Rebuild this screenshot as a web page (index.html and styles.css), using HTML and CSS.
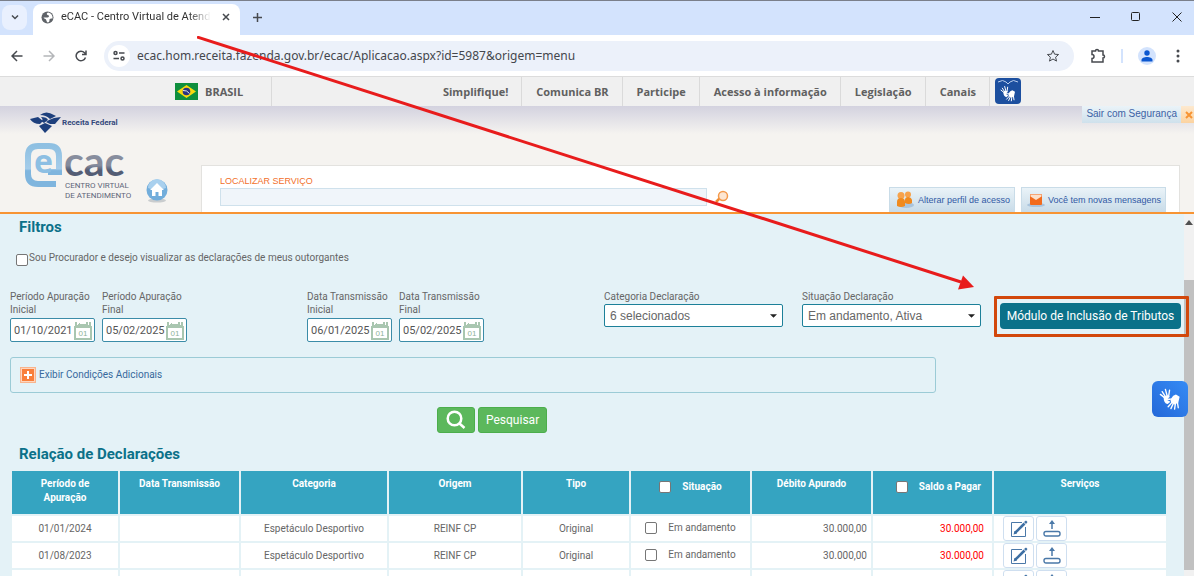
FILE: index.html
```html
<!DOCTYPE html>
<html lang="pt-BR">

<head>
    <meta charset="UTF-8">
    <meta name="viewport" content="width=device-width, initial-scale=1.0">
    <title>eCAC - Centro Virtual de Atendimento</title>
    <link rel="stylesheet" href="styles.css">
</head>

<body>
    <!-- símbolos reutilizados -->
    <svg class="sprites" aria-hidden="true">
        <symbol id="i-hands" viewBox="0 0 24 24">
            <g fill="none" stroke="#fff" stroke-linecap="round" stroke-linejoin="round">
                <path stroke-width="1.5" d="M6 10.500 1.500 7M7 9.500 3.500 4M9 9 7 1.500M10.500 9 11.500 2.500"/>
                <path stroke-width="1.5" d="M14 16l-4 4.500M16 16l-3 6.500M18 16l-1 7M20 15l1 6.500"/>
            </g>
            <path fill="#fff" d="M5 9.500 9 8l3 1.500-2.500 2L14 11.500 12 13H9l3.500 2-3 2.500Q5 17 5 9.500z"/>
            <path fill="#fff" d="M13 14l-1-1 3.500-4.500 3-1.500 4 2.500L21 16l-4 2-4-2z"/>
        </symbol>
        <symbol id="i-edit" viewBox="0 0 18 18">
            <path fill="none" stroke="#4a78a8" d="M12 2.500H1.500v14h14V7"/>
            <path stroke="#3d6fa3" stroke-width="2.600" d="M5 13 14.500 3.500"/>
            <path fill="#3d6fa3" d="m3.500 14.500 1-3.500 2.500 2.500zM14 2l2-1.500L17.500 2 16 4z"/>
        </symbol>
        <symbol id="i-send" viewBox="0 0 18 18">
            <path stroke="#4a78a8" stroke-width="1.500" d="M9 9V3"/>
            <path fill="#4a78a8" d="M9 0 6 4h6z"/>
            <rect x="1" y="11.500" width="16" height="4.500" rx="2" fill="none" stroke="#4a78a8" stroke-width="1.400"/>
        </symbol>
        <symbol id="i-calendar" viewBox="0 0 18 19">
            <path fill="#a9c6b0" d="M0 5h1V1h2v2h2V2h1v1h6V1h2v2h1V1h2v4h1v14H0z"/>
            <path fill="#fff" d="M2 7h14v10H2zM3 2h1v2H3zM14 2h1v2h-1z"/>
            <text x="9" y="15" text-anchor="middle" font-family="Liberation Sans, sans-serif" font-size="8" fill="#8fb39a">01</text>
        </symbol>
    </svg>

    <div class="tab-strip">
        <button class="tab-search" aria-label="Pesquisar guias">
            <svg width="10" height="10" viewBox="0 0 10 10"><path d="m2 3.500 3 3 3-3"/></svg>
        </button>
        <div class="tab">
            <svg width="13" height="13" viewBox="0 0 13 13">
                <circle cx="6.500" cy="6.500" r="6" fill="#5f6368"/>
                <path fill="#fff" d="M7 1.500c-1 .5-1.500 1-1 2s2 .5 2 1.500-1 1.500-2.500 1.500H2.500c.5 1.500 2 1 2.500 2s.5 2 1.500 3c2 0 2-2 2-3s1.500-1 3-1c.5-3-1.500-5.500-4.500-6z"/>
            </svg>
            <span class="tab-title">eCAC - Centro Virtual de Atendimento</span>
            <button class="tab-close" aria-label="Fechar guia">
                <svg width="10" height="10" viewBox="0 0 10 10"><path d="m2 2 6 6M8 2 2 8"/></svg>
            </button>
        </div>
        <button class="new-tab" aria-label="Nova guia">
            <svg width="11" height="11" viewBox="0 0 11 11"><path d="M5.500 1v9M1 5.500h9"/></svg>
        </button>
        <div class="window-buttons">
            <button aria-label="Minimizar"><svg width="10" height="10" viewBox="0 0 10 10"><path d="M0 5.500h10"/></svg></button>
            <button aria-label="Maximizar"><svg width="10" height="10" viewBox="0 0 10 10"><rect x=".5" y=".5" width="8" height="8" rx="1"/></svg></button>
            <button aria-label="Fechar"><svg width="10" height="10" viewBox="0 0 10 10"><path d="m.5.5 9 9M9.500.5l-9 9"/></svg></button>
        </div>
    </div>

    <div class="toolbar">
        <button aria-label="Voltar"><svg width="12" height="12" viewBox="0 0 12 12"><path d="M11.500 6H1M6 1 1 6l5 5"/></svg></button>
        <button class="disabled" aria-label="Avançar"><svg width="12" height="12" viewBox="0 0 12 12"><path d="M.5 6H11M6 1l5 5-5 5"/></svg></button>
        <button aria-label="Recarregar"><svg width="12" height="12" viewBox="0 0 12 12"><path d="M10.500 7.500A4.800 4.800 0 1 1 9.500 2.700L11 4.200M11 .5v4H7"/></svg></button>
        <div class="address">
            <span class="site-info">
                <svg width="12" height="12" viewBox="0 0 12 12"><circle cx="2.500" cy="3" r="1.500"/><path d="M6 3h5.500M.5 8.500H6"/><circle cx="9.500" cy="8.500" r="1.500"/></svg>
            </span>
            <input type="text" aria-label="Endereço" value="ecac.hom.receita.fazenda.gov.br/ecac/Aplicacao.aspx?id=5987&amp;origem=menu">
            <button aria-label="Favoritos">
                <svg width="14" height="14" viewBox="0 0 14 14"><path d="m7 1.500 1.600 3.700 4 .3-3 2.700.9 3.900L7 10l-3.500 2.100.9-3.900-3-2.700 4-.3z"/></svg>
            </button>
        </div>
        <button class="extensions" aria-label="Extensões">
            <svg width="16" height="16" viewBox="0 0 16 16"><path d="M2 3h3.500a1.500 1.500 0 0 1 3 0H13v4a1.500 1.500 0 0 1 0 3v4H2v-3.500a2 2 0 0 0 0-4z"/></svg>
        </button>
        <span class="divider"></span>
        <button class="profile" aria-label="Perfil">
            <svg width="12" height="12" viewBox="0 0 12 12"><circle cx="6" cy="3" r="2.700"/><path d="M.5 11.500V10c0-4 11-4 11 0v1.500z"/></svg>
        </button>
        <button aria-label="Menu">
            <svg class="dots" width="4" height="14" viewBox="0 0 4 14"><circle cx="2" cy="2" r="1.500"/><circle cx="2" cy="7" r="1.500"/><circle cx="2" cy="12" r="1.500"/></svg>
        </button>
    </div>

    <nav class="gov-bar">
        <a class="brasil" href="#">
            <svg width="23" height="17" viewBox="0 0 23 17">
                <path fill="#0f8f3d" d="M0 0h23v17H0z"/>
                <path fill="#f8d90f" d="M11.500 2 21 8.500 11.500 15 2 8.500z"/>
                <circle cx="11.500" cy="8.500" r="3.800" fill="#2a3480"/>
                <path fill="none" stroke="#dfe5ee" d="M8 7.500q4-.5 6.500 3"/>
            </svg>
            BRASIL
        </a>
        <a href="#">Simplifique!</a>
        <a href="#">Comunica BR</a>
        <a href="#">Participe</a>
        <a href="#">Acesso à informação</a>
        <a href="#">Legislação</a>
        <a href="#">Canais</a>
        <button class="vlibras-small" aria-label="VLibras">
            <svg width="26" height="26" viewBox="0 0 26 26">
                <path fill="none" stroke="#b9cdec" d="M3 4q5-3 8 0l2 2 2-2q3-3 8 0"/>
                <use href="#i-hands" x="5" y="7" width="16" height="17"/>
            </svg>
        </button>
    </nav>

    <header class="header">
        <div class="logos">
            <div class="receita">
                <svg width="31" height="21" viewBox="0 0 31 21">
                    <g fill="#1d3f7c">
                        <path d="M0 7l8-2 5 4-3 3Q3 12 0 7z"/>
                        <path d="M10 3q6-5 14 0l2 1-6 3q-4-4-10-4z"/>
                        <path d="M11 5q6 0 7 3l-4 3-3-2q3-1 0-4z"/>
                        <path d="M19 8l5-2 7-1-6 7h-5l-4-2z"/>
                        <path d="M9 14l6-3 7 3-7 7z"/>
                    </g>
                </svg>
                Receita Federal
            </div>
            <svg class="ecac" width="112" height="58" viewBox="0 0 112 58" role="img" aria-label="eCAC Centro Virtual de Atendimento">
                <defs>
                    <linearGradient id="g-blue" x1="0" y1="0" x2="0" y2="1">
                        <stop offset="0" stop-color="#8fc0e2"/><stop offset=".6" stop-color="#a5cdea"/><stop offset=".65" stop-color="#7fb5de"/>
                    </linearGradient>
                    <linearGradient id="g-gray" x1="0" y1="0" x2="0" y2="1">
                        <stop offset="0" stop-color="#8d93a3"/><stop offset=".6" stop-color="#858b9c"/><stop offset=".7" stop-color="#545d75"/>
                    </linearGradient>
                </defs>
                <path fill="none" stroke="url(#g-blue)" stroke-width="6" d="M32 42H14Q4 42 4 32V14Q4 4 14 4H25Q35 4 35 14V30H24"/>
                <text x="10" y="31" class="logo-e">e</text>
                <text x="40" y="34" class="logo-cac">cac</text>
                <text x="41" y="46" class="logo-small">CENTRO VIRTUAL</text>
                <text x="41" y="56" class="logo-small">DE ATENDIMENTO</text>
            </svg>
        </div>
        <a class="home" href="#" aria-label="Início">
            <svg width="22" height="24" viewBox="0 0 22 24">
                <ellipse cx="11" cy="21.500" rx="9" ry="2" fill="#c9ccce"/>
                <circle cx="11" cy="11" r="10.500" fill="#72addb"/>
                <path fill="#a9d0ee" d="M2 9a9 9 0 0 1 18 0q-9 4-18 0z"/>
                <path fill="#fff" d="m11 4 7 7h-2v6h-3.500v-4h-3v4H6v-6H4z"/>
            </svg>
        </a>
        <div class="header-main">
            <div class="logout">
                <a href="#">Sair com Segurança</a>
                <button aria-label="Fechar sessão"><svg width="8" height="8" viewBox="0 0 8 8"><path d="m1 1 6 6M7 1 1 7"/></svg></button>
            </div>
            <div class="service-box">
                <form class="service-search">
                    <label for="servico">LOCALIZAR SERVIÇO</label>
                    <div class="service-row">
                        <input type="text" id="servico">
                        <button type="button" aria-label="Localizar">
                            <svg width="14" height="14" viewBox="0 0 14 14"><path stroke="#f08a30" stroke-width="2.500" d="m1 12 4-4"/><circle cx="8" cy="6" r="4.500" fill="#fde6d2" stroke="#f49a4c" stroke-width="1.500"/></svg>
                        </button>
                    </div>
                </form>
                <a class="header-link" href="#">
                    <svg width="20" height="18" viewBox="0 0 20 18">
                        <ellipse cx="11" cy="14" rx="8" ry="3" fill="#a9c4dd"/>
                        <circle cx="13" cy="3.500" r="3" fill="#f7a24b"/><path fill="#f08a1e" d="M10 12V9q0-3 3-3t4 3v3q-3 2-7 0z"/>
                        <circle cx="6" cy="4.500" r="3.500" fill="#f7a24b"/><path fill="#f08a1e" d="M2 15v-4q0-4 4-4t4 4v4q-4 2-8 0z"/>
                    </svg>
                    Alterar perfil de acesso
                </a>
                <a class="header-link" href="#">
                    <svg width="18" height="16" viewBox="0 0 18 16">
                        <ellipse cx="9" cy="13" rx="9" ry="2" fill="#a9c4dd"/>
                        <rect x="3" y="2" width="12" height="11" rx="1" fill="#f26b1d"/>
                        <path fill="#fbe0cb" d="M3.500 2.500h11v2L9 8 3.500 4.500z"/>
                    </svg>
                    Você tem novas mensagens
                </a>
            </div>
        </div>
    </header>

    <div class="page">
        <main class="content">
            <h2>Filtros</h2>
            <label class="procurador"><input type="checkbox"> Sou Procurador e desejo visualizar as declarações de meus outorgantes</label>

            <form class="filters">
                <div class="field date">
                    <label for="apuracaoInicial">Período Apuração Inicial</label>
                    <div class="date-box"><input type="text" id="apuracaoInicial" value="01/10/2021"><svg width="18" height="19"><use href="#i-calendar"/></svg></div>
                </div>
                <div class="field date">
                    <label for="apuracaoFinal">Período Apuração Final</label>
                    <div class="date-box"><input type="text" id="apuracaoFinal" value="05/02/2025"><svg width="18" height="19"><use href="#i-calendar"/></svg></div>
                </div>
                <div class="field date group-start">
                    <label for="transmissaoInicial">Data Transmissão Inicial</label>
                    <div class="date-box"><input type="text" id="transmissaoInicial" value="06/01/2025"><svg width="18" height="19"><use href="#i-calendar"/></svg></div>
                </div>
                <div class="field date">
                    <label for="transmissaoFinal">Data Transmissão Final</label>
                    <div class="date-box"><input type="text" id="transmissaoFinal" value="05/02/2025"><svg width="18" height="19"><use href="#i-calendar"/></svg></div>
                </div>
                <div class="field choice group-start">
                    <label for="categoria">Categoria Declaração</label>
                    <select id="categoria"><option>6 selecionados</option></select>
                </div>
                <div class="field choice">
                    <label for="situacao">Situação Declaração</label>
                    <select id="situacao"><option>Em andamento, Ativa</option></select>
                </div>
                <div class="modulo-box">
                    <button type="button" class="modulo">Módulo de Inclusão de Tributos</button>
                    <span class="highlight"></span>
                </div>
            </form>

            <div class="conditions">
                <a href="#">
                    <svg width="16" height="16" viewBox="0 0 16 16"><path fill="#f9b48c" d="M0 0h16v16H0z"/><path fill="#f97f3a" stroke="#fff" stroke-width=".6" d="M1.500 1.500h13v13h-13z"/><path stroke="#fff" stroke-width="2" d="M8 4v8M4 8h8"/></svg>
                    Exibir Condições Adicionais
                </a>
            </div>

            <div class="actions">
                <button class="search-icon" aria-label="Buscar">
                    <svg width="20" height="20" viewBox="0 0 20 20"><circle cx="8.500" cy="8.500" r="6.800"/><path d="m13.500 13.500 5 4.500"/></svg>
                </button>
                <button>Pesquisar</button>
            </div>

            <h2>Relação de Declarações</h2>
            <table class="declaracoes">
                <colgroup>
                    <col class="c-periodo"><col class="c-data"><col class="c-categoria"><col class="c-origem"><col class="c-tipo"><col class="c-data"><col class="c-data"><col class="c-data"><col>
                </colgroup>
                <thead>
                    <tr>
                        <th>Período de Apuração</th>
                        <th>Data Transmissão</th>
                        <th>Categoria</th>
                        <th>Origem</th>
                        <th>Tipo</th>
                        <th><label class="check"><input type="checkbox"> Situação</label></th>
                        <th>Débito Apurado</th>
                        <th class="right"><label class="check"><input type="checkbox"> Saldo a Pagar</label></th>
                        <th>Serviços</th>
                    </tr>
                </thead>
                <tbody>
                    <tr>
                        <td>01/01/2024</td>
                        <td></td>
                        <td>Espetáculo Desportivo</td>
                        <td>REINF CP</td>
                        <td>Original</td>
                        <td><label class="check"><input type="checkbox"> Em andamento</label></td>
                        <td class="debito">30.000,00</td>
                        <td class="saldo">30.000,00</td>
                        <td class="servicos">
                            <button aria-label="Editar"><svg width="18" height="18"><use href="#i-edit"/></svg></button>
                            <button aria-label="Transmitir"><svg width="18" height="18"><use href="#i-send"/></svg></button>
                        </td>
                    </tr>
                    <tr>
                        <td>01/08/2023</td>
                        <td></td>
                        <td>Espetáculo Desportivo</td>
                        <td>REINF CP</td>
                        <td>Original</td>
                        <td><label class="check"><input type="checkbox"> Em andamento</label></td>
                        <td class="debito">30.000,00</td>
                        <td class="saldo">30.000,00</td>
                        <td class="servicos">
                            <button aria-label="Editar"><svg width="18" height="18"><use href="#i-edit"/></svg></button>
                            <button aria-label="Transmitir"><svg width="18" height="18"><use href="#i-send"/></svg></button>
                        </td>
                    </tr>
                    <tr>
                        <td></td>
                        <td></td>
                        <td></td>
                        <td></td>
                        <td></td>
                        <td></td>
                        <td></td>
                        <td></td>
                        <td class="servicos">
                            <button aria-label="Editar"><svg width="18" height="18"><use href="#i-edit"/></svg></button>
                            <button aria-label="Transmitir"><svg width="18" height="18"><use href="#i-send"/></svg></button>
                        </td>
                    </tr>
                </tbody>
            </table>
        </main>
        <div class="scrollbar">
            <svg width="8" height="5" viewBox="0 0 8 5"><path d="M4 0 8 5H0z"/></svg>
            <span class="thumb"></span>
        </div>
        <button class="vlibras" aria-label="VLibras"><svg width="22" height="24"><use href="#i-hands"/></svg></button>
    </div>

    <svg class="arrow" width="778" height="254" viewBox="0 0 778 254" aria-hidden="true">
        <path stroke="#e81c1c" stroke-width="3" d="m0 1 764 245"/>
        <path fill="#e81c1c" d="m777 251-11-11.500-5 14z"/>
    </svg>
</body>

</html>
```

FILE: styles.css
```css
:root {
    --teal: #0b7189;
    --teal-light: #35a4c1;
    --page-bg: #e4f2f7;
    --orange: #f79433;
    --text: #666666;
    --chrome-blue: #d3e3fd;
}

* {
    box-sizing: border-box;
}

body {
    font-family: Roboto, sans-serif;
    font-size: 10px;
    color: var(--text);
    margin: 0;
    height: 100vh;
    display: flex;
    flex-direction: column;
    overflow: hidden;
    position: relative;
}

button {
    font-family: inherit;
    border: none;
    background: none;
    padding: 0;
    cursor: pointer;
    display: flex;
    align-items: center;
    justify-content: center;
}

input {
    font-family: inherit;
    margin: 0;
}

input[type="checkbox"] {
    appearance: none;
    width: 12px;
    height: 12px;
    background: #fff;
    border: 1px solid #767676;
    border-radius: 2px;
    flex-shrink: 0;
}

input[type="checkbox"]:checked {
    background: var(--teal);
}

a {
    text-decoration: none;
}

svg {
    flex-shrink: 0;
}

.sprites {
    position: absolute;
    width: 0;
    height: 0;
}

/* navegador */
.tab-strip {
    display: flex;
    align-items: center;
    height: 35px;
    flex-shrink: 0;
    padding-bottom: 2px;
    background: var(--chrome-blue);
    border-top: 1px solid #7a7f8a;
}

.tab-strip svg,
.toolbar svg {
    fill: none;
    stroke: #474a4f;
    stroke-width: 1.5;
}

.tab-search {
    width: 25px;
    height: 25px;
    margin-left: 2px;
    border-radius: 8px;
    background: #e9f0fe;
}

.tab {
    display: flex;
    align-items: center;
    align-self: flex-end;
    width: 207px;
    height: 31px;
    margin: 0 0 -2px 6px;
    padding: 0 9px 5px 8px;
    border-radius: 8px 8px 0 0;
    background: #fff;
}

.tab > svg {
    stroke: none;
}

.tab-title {
    flex: 1;
    margin: 0 10px 0 7px;
    font-size: 11px;
    line-height: 16px;
    color: #333;
    white-space: nowrap;
    overflow: hidden;
    mask-image: linear-gradient(to right, #000 85%, transparent);
}

.new-tab {
    margin-left: 12px;
}

.window-buttons {
    display: flex;
    gap: 31px;
    margin-left: auto;
    margin-right: 12px;
}

.window-buttons svg {
    stroke: #222;
    stroke-width: 1;
}

.toolbar {
    display: flex;
    align-items: center;
    height: 41px;
    flex-shrink: 0;
    padding: 0 14px 0 11px;
    gap: 20px;
    background: #fff;
}

.toolbar .disabled svg {
    stroke: #b4b6b9;
}

.address {
    display: flex;
    align-items: center;
    flex: 1;
    height: 30px;
    margin-left: -3px;
    padding: 0 14px 0 4px;
    border-radius: 15px;
    background: #ecf1fa;
}

.site-info {
    display: flex;
    align-items: center;
    justify-content: center;
    width: 22px;
    height: 22px;
    border-radius: 11px;
    background: #fff;
}

.address input {
    flex: 1;
    padding: 0 0 0 7px;
    border: none;
    background: none;
    font-family: "Noto Sans", sans-serif;
    font-size: 12px;
    color: #44474d;
}

.address button svg {
    stroke-width: 1;
}

.toolbar .extensions {
    margin-left: -4px;
}

.toolbar .divider {
    width: 2px;
    height: 14px;
    margin: 0 -5px;
    background: var(--chrome-blue);
}

.toolbar .profile {
    width: 18px;
    height: 18px;
    border-radius: 9px;
    background: var(--chrome-blue);
}

.toolbar .profile svg {
    fill: #0b57d0;
    stroke: none;
}

.toolbar .dots {
    fill: #474a4f;
    stroke: none;
}

/* barra do governo */
.gov-bar {
    display: flex;
    height: 30px;
    flex-shrink: 0;
    align-items: stretch;
    background: #f0f0f0;
    border-top: 1px solid #dcdcdc;
}

.gov-bar a {
    display: flex;
    align-items: center;
    padding: 0 13px 1px 14px;
    border-right: 1px solid #dadada;
    font-family: "Open Sans", sans-serif;
    font-size: 11px;
    font-weight: bold;
    color: #606060;
}

.gov-bar .brasil {
    gap: 7px;
    margin-right: auto;
    padding: 0 28px 0 175px;
}

.gov-bar .vlibras-small {
    width: 26px;
    height: 26px;
    margin: 1px 173px 0 5px;
    border-radius: 4px;
    background: #1c4f9f;
}

/* cabeçalho */
.header {
    display: flex;
    height: 108px;
    flex-shrink: 0;
    background: linear-gradient(#d3d2df, #f5f3f0 28px);
    border-bottom: 2px solid var(--orange);
}

.logos {
    width: 146px;
    padding: 6px 0 0 24px;
}

.receita {
    display: flex;
    align-items: center;
    gap: 1px;
    padding-left: 6px;
    font-size: 8px;
    font-weight: bold;
    color: #34497c;
}

.ecac {
    display: block;
    margin-top: 9px;
}

.logo-e {
    font: bold 32px "Open Sans", sans-serif;
    fill: #8dbfe3;
}

.logo-cac {
    font: bold 41px Lato, sans-serif;
    fill: url(#g-gray);
}

.logo-small {
    font: 8px Roboto, sans-serif;
    fill: #5f667a;
}

.home {
    align-self: flex-end;
    width: 55px;
    height: 33px;
}

.header-main {
    display: flex;
    flex: 1;
    flex-direction: column;
    justify-content: space-between;
}

.logout {
    display: flex;
    align-self: flex-end;
    height: 17px;
    font-family: "Liberation Sans", Arial, sans-serif;
}

.logout a {
    padding: 1px 4px;
    font-size: 10px;
    line-height: 14px;
    color: #3c62a5;
    background: linear-gradient(#eaf3f8, #cfe1ec);
}

.logout button {
    width: 13px;
    padding-left: 3px;
    background: linear-gradient(#fde9cf, #fcd3a0);
}

.logout path {
    stroke: var(--orange);
    stroke-width: 2;
}

.service-box {
    display: flex;
    align-items: flex-end;
    height: 47px;
    margin-right: 14px;
    padding: 0 13px 0 18px;
    gap: 6px;
    background: #fff;
    border: 1px solid #e3e2df;
    border-bottom: none;
}

.service-search {
    flex: 1;
    align-self: stretch;
    padding-top: 9px;
    font-family: "Liberation Sans", Arial, sans-serif;
}

.service-search label {
    display: block;
    font-size: 9px;
    line-height: 12px;
    color: #f2702a;
}

.service-row {
    display: flex;
    align-items: center;
    gap: 8px;
    margin-top: 1px;
    padding-right: 154px;
}

.service-row input {
    flex: 1;
    height: 18px;
    background: #f0f5fa;
    border: 1px solid #cfe1ec;
}

.header-link {
    display: flex;
    align-items: center;
    gap: 3px;
    height: 25px;
    padding: 0 4px 0 5px;
    font-family: "Liberation Sans", Arial, sans-serif;
    font-size: 9px;
    color: #3159a5;
    background: linear-gradient(#eaf3f8, #c8dbe8);
    border: 1px solid #c9dce8;
    border-bottom: none;
}

/* conteúdo */
.page {
    display: flex;
    flex: 1;
    min-height: 0;
    position: relative;
    background: var(--page-bg);
}

.content {
    flex: 1;
    padding: 3px 16px 0 10px;
}

h2 {
    margin: 0 0 0 9px;
    font-size: 15px;
    line-height: 20px;
    color: var(--teal);
}

.procurador {
    display: flex;
    align-items: center;
    gap: 1px;
    margin: 13px 0 0 6px;
    line-height: 16px;
}

.procurador input {
    margin-top: 3px;
}

.filters {
    display: flex;
    align-items: flex-start;
    gap: 7px;
    margin-top: 24px;
}

.field label {
    display: block;
    line-height: 13px;
}

.date {
    width: 85px;
}

.group-start {
    margin-left: 113px;
}

.date-box {
    display: flex;
    align-items: center;
    height: 24px;
    margin-top: 2px;
    padding: 0 2px 0 3px;
    background: #fff;
    border: 1px solid #3b8ca8;
    border-radius: 2px;
}

.date-box input {
    flex: 1;
    min-width: 0;
    padding: 0;
    border: none;
    background: none;
    font-size: 11px;
    color: #555;
}

.choice select {
    display: block;
    width: 179px;
    height: 23px;
    margin-top: 1px;
    padding: 0 5px;
    appearance: none;
    font-family: "Liberation Sans", Arial, sans-serif;
    font-size: 12px;
    color: var(--text);
    background: #fff url("data:image/svg+xml,%3Csvg xmlns='http://www.w3.org/2000/svg' viewBox='0 0 8 4'%3E%3Cpath fill='%23222' d='M0 0h8L4 4z'/%3E%3C/svg%3E") no-repeat right 5px center / 7px 4px;
    border: 1px solid #1c8099;
    border-radius: 2px;
}

.choice + .choice {
    margin-left: 12px;
}

.modulo-box {
    position: relative;
    flex: 1;
    margin: 13px -13px 0 12px;
}

.modulo {
    width: 100%;
    height: 26px;
    border-radius: 4px;
    background: var(--teal);
    font-size: 12px;
    color: #fff;
    white-space: nowrap;
}

/* moldura sobre o botão e a barra de rolagem */
.highlight {
    position: absolute;
    inset: -7px -8px -8px -6px;
    z-index: 2;
    border: 3px solid #d2480c;
    border-radius: 1px;
}

.conditions {
    width: 80%;
    margin-top: 15px;
    padding: 9px;
    border: 1px solid #9bcbd6;
    border-radius: 3px;
}

.conditions a {
    display: flex;
    align-items: center;
    gap: 3px;
    line-height: 16px;
    color: #37699d;
}

.actions {
    display: flex;
    gap: 3px;
    margin: 14px 0 11px 427px;
}

.actions button {
    height: 26px;
    padding: 0 7px;
    border: 1px solid #4cae4c;
    border-radius: 3px;
    background: #5cb85c;
    font-size: 12px;
    color: #fff;
}

.actions .search-icon {
    width: 38px;
}

.actions svg {
    fill: none;
    stroke: #fff;
    stroke-width: 2.5;
}

.declaracoes {
    width: 100%;
    margin-top: 5px;
    table-layout: fixed;
    border-collapse: collapse;
}

.c-periodo {
    width: 108px;
}

.c-data {
    width: 121px;
}

.c-categoria {
    width: 148px;
}

.c-origem {
    width: 134px;
}

.c-tipo {
    width: 108px;
}

th,
td {
    border: 2px solid #e4f2f6;
    text-align: center;
    padding: 0;
}

th {
    height: 45px;
    padding: 6px 15px;
    vertical-align: top;
    line-height: 14px;
    color: #fff;
    background: var(--teal-light);
    white-space: nowrap;
}

th:first-child {
    white-space: normal;
}

td {
    height: 27px;
    background: #fff;
}

.check {
    display: inline-flex;
    align-items: center;
    gap: 11px;
}

th .check {
    margin-top: 3px;
}

th.right {
    text-align: right;
    padding-right: 11px;
}

td.debito {
    text-align: right;
    padding-right: 4px;
}

td.saldo {
    text-align: right;
    padding-right: 8px;
    color: #ff0000;
}

.servicos {
    text-align: left;
    padding-left: 9px;
}

.servicos button {
    display: inline-flex;
    width: 31px;
    height: 25px;
    vertical-align: middle;
    background: #fff;
    border: 1px solid #cfdff0;
    border-radius: 3px;
}

.scrollbar {
    display: flex;
    flex-direction: column;
    align-items: center;
    width: 10px;
    padding-top: 6px;
    background: #f1f1f1;
}

.scrollbar svg {
    fill: #505050;
}

.thumb {
    width: 100%;
    height: 290px;
    margin-top: 55px;
    background: #c1c1c1;
}

.vlibras {
    position: absolute;
    right: 6px;
    top: 167px;
    width: 36px;
    height: 36px;
    border-radius: 6px;
    background: linear-gradient(to top right, #2468d8, #358bf5);
}

/* seta de instrução */
.arrow {
    position: absolute;
    left: 197px;
    top: 36px;
    z-index: 3;
    pointer-events: none;
}
```
